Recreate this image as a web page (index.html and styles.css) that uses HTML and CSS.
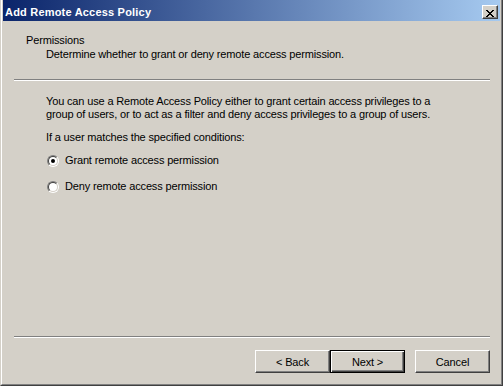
FILE: index.html
```html
<!DOCTYPE html>
<html lang="en">
<head>
    <meta charset="UTF-8">
    <meta name="viewport" content="width=device-width, initial-scale=1.0">
    <title>Add Remote Access Policy</title>
    <link rel="stylesheet" href="styles.css">
</head>
<body>
    <div class="window">
        <div class="frame">
            <div class="titlebar">
                <span class="title">Add Remote Access Policy</span>
                <button class="close-btn" title="Close">
                    <svg width="8" height="7" viewBox="0 0 8 7" shape-rendering="crispEdges">
                        <path fill="#000" d="M0 0h2v1h-2zM6 0h2v1h-2zM1 1h2v1h-2zM5 1h2v1h-2zM2 2h4v1h-4zM3 3h2v1h-2zM2 4h4v1h-4zM1 5h2v1h-2zM5 5h2v1h-2zM0 6h2v1h-2zM6 6h2v1h-2z"/>
                    </svg>
                </button>
            </div>

            <div class="client">
                <!-- Wizard header -->
                <div class="header">
                    <div class="header-title">Permissions</div>
                    <div class="header-sub">Determine whether to grant or deny remote access permission.</div>
                </div>
                <div class="separator"></div>

                <div class="content">
                    <p class="intro">You can use a Remote Access Policy either to grant certain access privileges to a group of users, or to act as a filter and deny access privileges to a group of users.</p>
                    <p class="question">If a user matches the specified conditions:</p>
                    <label class="option first">
                        <span class="radio checked"></span>
                        Grant remote access permission
                    </label>
                    <label class="option">
                        <span class="radio"></span>
                        Deny remote access permission
                    </label>
                </div>

                <div class="separator"></div>
                <div class="buttons">
                    <button class="wiz-btn">&lt; Back</button>
                    <button class="wiz-btn default">Next &gt;</button>
                    <button class="wiz-btn cancel">Cancel</button>
                </div>
            </div>
        </div>
    </div>
</body>
</html>
```

FILE: styles.css
```css
body {
    margin: 0;
    padding: 0;
    font-family: "Liberation Sans", Arial, sans-serif;
    font-size: 11px;
    line-height: 13px;
    letter-spacing: -0.15px;
    color: #000;
    background: #d4d0c8;
}
.window {
    width: 503px;
    height: 386px;
    box-sizing: border-box;
    background: #d4d0c8;
    border-left: 1px solid #d4d0c8;
    border-right: 1px solid #404040;
    border-bottom: 1px solid #404040;
}
.frame {
    height: 100%;
    box-sizing: border-box;
    border-left: 1px solid #fff;
    border-right: 1px solid #808080;
    border-bottom: 1px solid #808080;
    padding: 0 1px 1px 1px;
    display: flex;
    flex-direction: column;
}
/* Title bar */
.titlebar {
    height: 21px;
    box-sizing: border-box;
    padding: 5px 2px 0 2px;
    display: flex;
    align-items: flex-start;
    justify-content: space-between;
    background: linear-gradient(to right, #0a246a, #a6caf0);
}
.title {
    margin-top: 1px;
    color: #fff;
    font-weight: bold;
    letter-spacing: 0.2px;
    white-space: nowrap;
}
.close-btn {
    width: 16px;
    height: 14px;
    box-sizing: border-box;
    margin: 0;
    padding: 2px 0 0 3px;
    border: 1px solid;
    border-color: #fff #404040 #404040 #fff;
    box-shadow: inset -1px -1px #808080;
    background: #d4d0c8;
    display: block;
    line-height: 0;
    text-align: left;
}
.close-btn svg {
    display: block;
}
/* Client area */
.client {
    flex: 1;
    display: flex;
    flex-direction: column;
}
.header {
    height: 58px;
    box-sizing: border-box;
    padding: 13px 0 0 23px;
}
.header-sub {
    margin-top: 1px;
    padding-left: 20px;
}
.separator {
    width: 476px;
    margin-left: 11px;
    border-top: 1px solid #808080;
    border-bottom: 1px solid #fff;
}
.content {
    flex: 1;
    padding: 14px 0 0 43px;
}
.content p {
    margin: 0;
}
.intro {
    width: 400px;
}
.question {
    margin-top: 10px !important;
}
.option {
    display: flex;
    align-items: center;
    height: 13px;
    margin-top: 13px;
}
.option.first {
    margin-top: 10px;
}
.radio {
    position: relative;
    width: 12px;
    height: 12px;
    box-sizing: border-box;
    margin: 0 6px 0 1px;
    border-radius: 50%;
    border: 1px solid;
    border-color: #808080 #fff #fff #808080;
}
.radio::before {
    content: "";
    display: block;
    width: 10px;
    height: 10px;
    box-sizing: border-box;
    border-radius: 50%;
    border: 1px solid;
    border-color: #404040 #d4d0c8 #d4d0c8 #404040;
    background: #fff;
}
.radio.checked::after {
    content: "";
    position: absolute;
    left: 3px;
    top: 3px;
    width: 4px;
    height: 4px;
    border-radius: 50%;
    background: #000;
}
/* Wizard buttons */
.buttons {
    display: flex;
    justify-content: flex-end;
    padding: 12px 10px 10px 0;
}
.wiz-btn {
    width: 75px;
    height: 23px;
    box-sizing: border-box;
    margin: 0;
    padding: 0;
    font-family: inherit;
    font-size: 11px;
    letter-spacing: inherit;
    color: #000;
    background: #d4d0c8;
    border: 1px solid;
    border-color: #fff #404040 #404040 #fff;
    box-shadow: inset -1px -1px #808080;
}
.wiz-btn.default {
    border-color: #000;
    box-shadow: inset 1px 1px #fff, inset -1px -1px #404040, inset -2px -2px #808080;
}
.wiz-btn.cancel {
    margin-left: 10px;
}
```
